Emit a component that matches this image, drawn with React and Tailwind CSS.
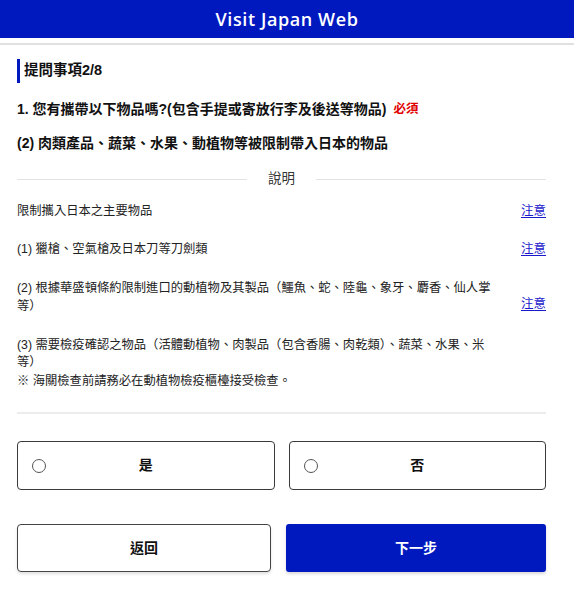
export default function App() {
  const font = { fontFamily: '"Liberation Sans", Arial, "Noto Sans CJK TC", sans-serif' };
  return (
    <div className="w-[574px] min-h-[599px] bg-white text-[#222]" style={font}>
      <div className="h-[38px] bg-[#0019bf] flex items-center justify-center">
        <span className="text-white text-[18px] font-semibold tracking-[0.6px]" style={{ fontFamily: '"Open Sans", "Noto Sans", sans-serif' }}>
          Visit Japan Web
        </span>
      </div>
      <div className="mt-[5px] h-[2px] bg-[#e0e0e0]" />
      <div className="pl-[17px] pr-[28px]">
        <div className="mt-[14px] h-[24px] flex items-center border-l-[3px] border-[#0019bf] pl-[4px]">
          <span className="text-[14.5px] font-bold text-[#111]">提問事項2/8</span>
        </div>
        <div className="mt-[16px] h-[20px] flex items-center text-[14px] font-bold text-[#111]">
          <span>1. 您有攜帶以下物品嗎?(包含手提或寄放行李及後送等物品)</span>
          <span className="ml-[7px] text-[12.5px] text-[#e00000]">必須</span>
        </div>
        <div className="mt-[14px] h-[20px] flex items-center text-[14px] font-bold text-[#111]">
          (2) 肉類產品、蔬菜、水果、動植物等被限制帶入日本的物品
        </div>
        <div className="mt-[16px] h-[20px] flex items-center gap-[21px]">
          <div className="flex-1 h-px bg-[#e2e2e2]" />
          <span className="text-[13.5px] text-[#333]">說明</span>
          <div className="flex-1 h-px bg-[#e2e2e2]" />
        </div>
        <div className="mt-[12px] flex items-center justify-between text-[12.3px] leading-[20px]">
          <span>限制攜入日本之主要物品</span>
          <a className="text-[12.5px] text-[#1a1acc] underline underline-offset-2">注意</a>
        </div>
        <div className="mt-[18px] flex items-center justify-between text-[12.3px] leading-[20px]">
          <span>(1) 獵槍、空氣槍及日本刀等刀劍類</span>
          <a className="text-[12.5px] text-[#1a1acc] underline underline-offset-2">注意</a>
        </div>
        <div className="mt-[21px] flex items-end justify-between text-[12.3px] leading-[17.5px]">
          <span>
            (2) 根據華盛頓條約限制進口的動植物及其製品（鱷魚、蛇、陸龜、象牙、麝香、仙人掌
            <br />
            等）
          </span>
          <a className="mb-[2px] text-[12.5px] text-[#1a1acc] underline underline-offset-2">注意</a>
        </div>
        <div className="mt-[22px] text-[12.3px] leading-[17px]">
          <div>
            (3) 需要檢疫確認之物品（活體動植物、肉製品（包含香腸、肉乾類）、蔬菜、水果、米
            <br />
            等）
          </div>
          <div className="mt-[2px]">※ 海關檢查前請務必在動植物檢疫櫃檯接受檢查。</div>
        </div>
        <div className="mt-[22px] h-[2px] bg-[#ececec]" />
        <div className="mt-[27px] flex gap-[14px]">
          {['是', '否'].map((t) => (
            <div key={t} className="relative flex-1 h-[49px] border-[1.5px] border-[#3a3a3a] rounded-[4px] flex items-center justify-center">
              <div className="absolute left-[14px] top-1/2 -translate-y-1/2 w-[14px] h-[14px] rounded-full border border-[#555] bg-white" />
              <span className="text-[14px] font-bold text-[#111]">{t}</span>
            </div>
          ))}
        </div>
        <div className="mt-[34px] flex gap-[15px]">
          <div className="w-[254px] h-[48px] border-[1.5px] border-[#444] rounded-[4px] flex items-center justify-center shadow-[0_2px_3px_rgba(0,0,0,0.12)]">
            <span className="text-[14px] font-bold text-[#111]">返回</span>
          </div>
          <div className="flex-1 h-[48px] bg-[#0019bf] rounded-[3px] flex items-center justify-center shadow-[0_2px_3px_rgba(0,0,0,0.15)]">
            <span className="text-[14px] font-bold text-white">下一步</span>
          </div>
        </div>
      </div>
    </div>
  );
}
